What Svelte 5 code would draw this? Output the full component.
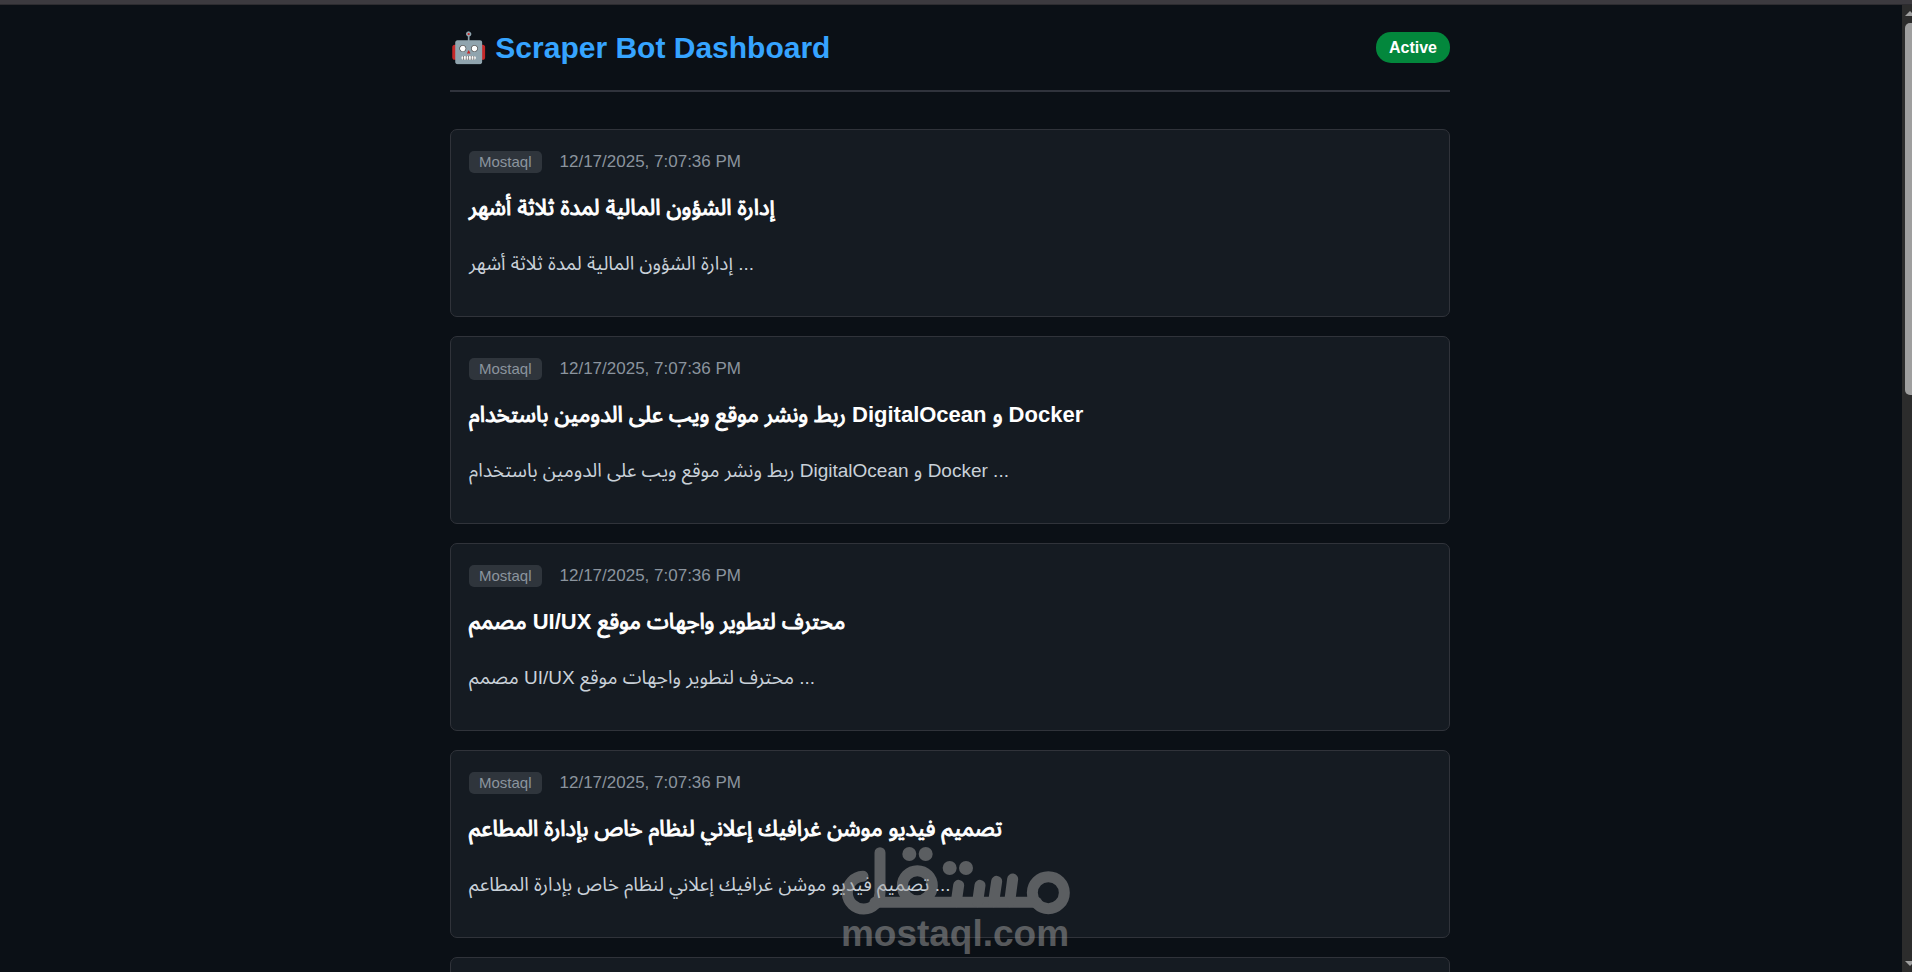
<script lang="ts">
	type Project = { source: string; time: string; title: string };

	const projects: Project[] = [
		{ source: "Mostaql", time: "12/17/2025, 7:07:36 PM", title: "إدارة الشؤون المالية لمدة ثلاثة أشهر" },
		{ source: "Mostaql", time: "12/17/2025, 7:07:36 PM", title: "ربط ونشر موقع ويب على الدومين باستخدام DigitalOcean و Docker" },
		{ source: "Mostaql", time: "12/17/2025, 7:07:36 PM", title: "مصمم UI/UX محترف لتطوير واجهات موقع" },
		{ source: "Mostaql", time: "12/17/2025, 7:07:36 PM", title: "تصميم فيديو موشن غرافيك إعلاني لنظام خاص بإدارة المطاعم" },
	];

	// odd parts are the latin words
	const parts = (title: string) => title.split(/([A-Za-z/]+)/);
</script>

<div class="window">
	<div class="topbar"></div>

	<div class="view">
		<main>
			<div class="container">
				<header>
					<h1>🤖 Scraper Bot Dashboard</h1>
					<span class="status">Active</span>
				</header>

				<div class="list">
					{#each projects as project}
						<article class="card">
							<div class="meta">
								<span class="source">{project.source}</span>
								<time>{project.time}</time>
							</div>
							<h2>{#each parts(project.title) as part, i}{#if i % 2}{part}{:else}<span class="arabic">{part}</span>{/if}{/each}</h2>
							<p>{project.title} ...</p>
						</article>
					{/each}
					<article class="card"></article>
				</div>
			</div>
		</main>

		<div class="scrollbar" aria-hidden="true">
			<svg width="7" height="5" viewBox="0 0 7 5"><path d="M0 5L5 0L7 2V5Z" /></svg>
			<div class="thumb"></div>
			<svg width="7" height="5" viewBox="0 0 7 5"><path d="M0 0L5 5L7 3V0Z" /></svg>
		</div>
	</div>

	<div class="watermark">
		<svg viewBox="63 141 687 204" width="229" height="68" aria-label="مستقل">
			<g fill="none" stroke="currentColor" stroke-width="33" stroke-linecap="round">
				<circle cx="685" cy="278" r="48" />
				<circle cx="292" cy="257" r="45" />
				<path d="M129 229a49 49 0 1 0 51 49V158" />
				<path d="M165 307H650" />
				<path d="M578 237L569 305M530 244L521 305M480 256L473 305M416 256L409 305" />
			</g>
			<g fill="currentColor">
				<circle cx="268" cy="162" r="21" />
				<circle cx="317" cy="162" r="21" />
				<circle cx="389" cy="204" r="21" />
				<circle cx="438" cy="204" r="21" />
			</g>
		</svg>
		<span>mostaql.com</span>
	</div>
</div>

<style>
	:global(body) {
		background: #0d1117;
	}

	.window {
		position: relative;
		display: flex;
		flex-direction: column;
		height: 100vh;
		overflow: hidden;

		background: #0b1016;
		color: #c9d1d9;
		font-family: "Liberation Sans", Arial, "Noto Sans Arabic", "Noto Sans Arabic UI", "Open Sans", "Noto Sans", sans-serif;
	}

	.topbar {
		flex: none;
		height: 5px;
		background: #3c3a3f;
		box-sizing: border-box;
		border-bottom: 1px solid #2d2c30;
	}

	.view {
		display: flex;
		flex: 1;
		min-height: 0;
	}

	main {
		flex: 1;
		padding-right: 2px;
		overflow: hidden;
	}

	.container {
		max-width: 1000px;
		margin: 0 auto;
	}

	header {
		display: flex;
		justify-content: space-between;
		align-items: center;
		height: 85px;
		border-bottom: 2px solid #30333c;
		margin-bottom: 37px;
	}

	h1 {
		margin: 0;
		font-size: 30px;
		line-height: 36px;
		color: #36a4ff;
	}

	.status {
		padding: 0 13px;
		border-radius: 15px;
		background: #03873c;
		color: #fff;
		font-size: 16px;
		font-weight: bold;
		line-height: 31px;
	}

	.list {
		display: flex;
		flex-direction: column;
		gap: 19px;
	}

	.card {
		min-height: 131px;
		padding: 18px 18px 37px;
		border: 1px solid #30333a;
		border-radius: 7px;
		background: #151b22;
	}

	.meta {
		display: flex;
		align-items: center;
		gap: 18px;
		height: 28px;
		color: #8b949e;
		font-size: 17px;
	}

	.source {
		padding: 0 10px;
		border-radius: 5px;
		background: #2f353c;
		font-size: 15px;
		line-height: 22px;
	}

	h2 {
		margin: 14px 0 24px;
		color: #fff;
		font-size: 22px;
		line-height: 35px;
	}

	/* regular letters thickened by a stroke, the bold cut is too wide */
	.arabic {
		font-weight: normal;
		-webkit-text-stroke: 1px #fff;
	}

	p {
		margin: 0;
		font-size: 19px;
		line-height: 30px;
	}

	.scrollbar {
		display: flex;
		flex-direction: column;
		align-items: flex-end;
		flex: none;
		width: 10px;
		padding: 6px 0;
		box-sizing: border-box;
		background: #2c2c2c;
		fill: #9f9f9f;
	}

	.scrollbar svg {
		flex: none;
	}

	.thumb {
		width: 7px;
		height: 39%;
		margin: 7px 0 auto;
		border-radius: 5px 0 0 5px;
		background: #9f9f9f;
	}

	/* sits over the list */
	.watermark {
		position: absolute;
		left: 0;
		right: 0;
		bottom: 20px;
		display: flex;
		flex-direction: column;
		align-items: center;
		padding-right: 2px;
		color: #a0a0a0;
		opacity: 0.5;
		pointer-events: none;
	}

	.watermark span {
		font-size: 37px;
		font-weight: bold;
		line-height: 37px;
	}
</style>
